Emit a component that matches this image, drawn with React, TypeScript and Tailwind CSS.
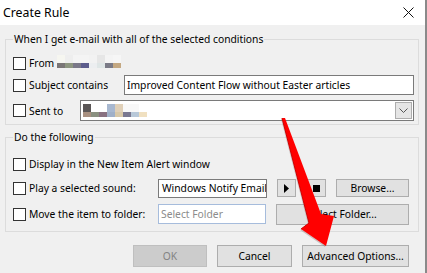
import type { ReactNode } from "react";

const font = { fontFamily: '"Noto Sans", "Open Sans", sans-serif' };

function Check({ label }: { label: string }) {
  return (
    <div className="flex items-center">
      <div className="w-[13px] h-[13px] border border-[#333] bg-white shrink-0" />
      <span className="ml-[3px] whitespace-nowrap">{label}</span>
    </div>
  );
}

function Btn({
  children,
  className = "",
  disabled = false,
}: {
  children: ReactNode;
  className?: string;
  disabled?: boolean;
}) {
  return (
    <div
      className={
        "flex items-center justify-center border shrink-0 whitespace-nowrap " +
        (disabled
          ? "bg-[#cccccc] border-[#bfbfbf] text-[#838383] "
          : "bg-[#e1e1e1] border-[#adadad] text-black ") +
        className
      }
    >
      {children}
    </div>
  );
}

const fromBlocks = ["#7a7676", "#8d9680", "#7a7888", "#5c5c8c", "#eceef0", "#dfe6e6", "#7a7a86", "#c4a882"];
const fromTop = ["#f6f6f0", "#eeeeee", "#f4f4f4", "#f4f4f4", "#f2f2f2", "#e6e6e6", "#f4f4f4", "#f6f6f6"];
const sentTop = ["#5a5656", "#ffffff", "#ffffff", "#a8b8d0", "#e0d0b8", "#f8f8f8", "#f8f8f8", "#ffffff"];
const sentBottom = ["#a89080", "#8a9080", "#887080", "#a0b0c8", "#d8c8a8", "#7a7890", "#b8c8d8", "#f0e0c0"];

function Mosaic({ top, bottom }: { top: string[]; bottom: string[] }) {
  return (
    <div className="flex flex-col">
      <div className="flex">
        {top.map((c, i) => (
          <div key={i} className="w-[8px] h-[8px]" style={{ background: c }} />
        ))}
      </div>
      <div className="flex">
        {bottom.map((c, i) => (
          <div key={i} className="w-[8px] h-[5px]" style={{ background: c }} />
        ))}
      </div>
    </div>
  );
}

export default function App() {
  return (
    <div
      className="relative w-[427px] h-[273px] bg-[#f0f0f0] text-[10.3px] leading-[16px] text-black overflow-hidden border-r-2 border-[#8a8a8a]"
      style={font}
    >
      <div className="h-[25px] bg-white flex items-center justify-between pl-[3px] pr-[11px]">
        <span className="text-[12.3px]">Create Rule</span>
        <svg width="11" height="11" viewBox="0 0 11 11">
          <path d="M0.5 0.5 L10.5 10.5 M10.5 0.5 L0.5 10.5" stroke="#111" strokeWidth="1" />
        </svg>
      </div>

      <div className="pl-[5px] pr-[6px]">
        <fieldset className="mt-[6px] border border-[#dcdcdc] pl-[7px] pr-[6px] pb-[3px]">
          <legend className="px-[1px] leading-[16px]">When I get e-mail with all of the selected conditions</legend>
          <div className="mt-[6px] h-[20px] flex items-center">
            <Check label="From" />
            <div className="ml-[3px] -mt-[3px]">
              <Mosaic top={fromTop} bottom={fromBlocks} />
            </div>
          </div>
          <div className="mt-[2px] h-[20px] flex items-center">
            <Check label="Subject contains" />
            <div className="ml-auto w-[290px] h-[20px] bg-white border border-[#7a7a7a] flex items-center pl-[2px] -mr-[2px] whitespace-nowrap">
              Improved Content Flow without Easter articles
            </div>
          </div>
          <div className="mt-[5px] h-[21px] flex items-center">
            <Check label="Sent to" />
            <div className="ml-auto w-[334px] h-[21px] bg-white border border-[#7a7a7a] flex items-center justify-between pl-[2px] pr-[1px] -mr-[2px]">
              <Mosaic top={sentTop} bottom={sentBottom} />
              <div className="w-[17px] h-[17px] bg-[#e5e5e5] border border-[#adadad] flex items-center justify-center">
                <svg width="9" height="5" viewBox="0 0 9 5">
                  <path d="M0.5 0.5 L4.5 4.5 L8.5 0.5" stroke="#555" fill="none" strokeWidth="1" />
                </svg>
              </div>
            </div>
          </div>
        </fieldset>

        <fieldset className="mt-[4px] border border-[#dcdcdc] pl-[7px] pr-[9px] pb-[7px]">
          <legend className="px-[1px] leading-[16px]">Do the following</legend>
          <div className="mt-[9px] h-[20px] flex items-center">
            <Check label="Display in the New Item Alert window" />
          </div>
          <div className="mt-[4px] h-[20px] flex items-center">
            <div className="w-[145px] shrink-0">
              <Check label="Play a selected sound:" />
            </div>
            <div className="w-[109px] h-[19px] shrink-0 bg-white border border-[#7a7a7a] flex items-center pl-[3px] whitespace-nowrap overflow-hidden">
              Windows Notify Email
            </div>
            <Btn className="ml-[10px] w-[19px] h-[18px]">
              <svg width="5" height="9" viewBox="0 0 5 9">
                <path d="M0 0 L5 4.5 L0 9 Z" fill="#000" />
              </svg>
            </Btn>
            <Btn className="ml-[10px] w-[20px] h-[18px]">
              <div className="w-[7px] h-[7px] bg-black" />
            </Btn>
            <Btn className="ml-auto w-[73px] h-[18px]">Browse...</Btn>
          </div>
          <div className="mt-[6px] h-[20px] flex items-center">
            <div className="w-[145px] shrink-0">
              <Check label="Move the item to folder:" />
            </div>
            <div className="w-[108px] h-[20px] shrink-0 bg-white border border-[#a6bcdc] text-[#8c8c8c] flex items-center pl-[2px] whitespace-nowrap">
              Select Folder
            </div>
            <Btn className="ml-auto w-[133px] h-[21px]">Select Folder...</Btn>
          </div>
        </fieldset>

        <div className="mt-[13px] flex justify-end gap-[10px] pr-[10px]">
          <Btn disabled className="w-[74px] h-[22px]">OK</Btn>
          <Btn className="w-[75px] h-[22px]">Cancel</Btn>
          <Btn className="w-[107px] h-[22px]">Advanced Options...</Btn>
        </div>
      </div>

      <svg className="absolute left-0 top-0 pointer-events-none" width="427" height="273" viewBox="0 0 427 273">
        <polygon
          points="281,119 284,119 317,215 333,217 325,247 300,230 308,224"
          fill="#8a6a6a"
          opacity="0.35"
        />
        <polygon points="282,118 285,118 321,214 334,216 326,246 301,229 309,223" fill="#ff0000" />
        <polyline points="282,118 309,223 301,229" fill="none" stroke="#d00000" strokeWidth="1" />
      </svg>
    </div>
  );
}
